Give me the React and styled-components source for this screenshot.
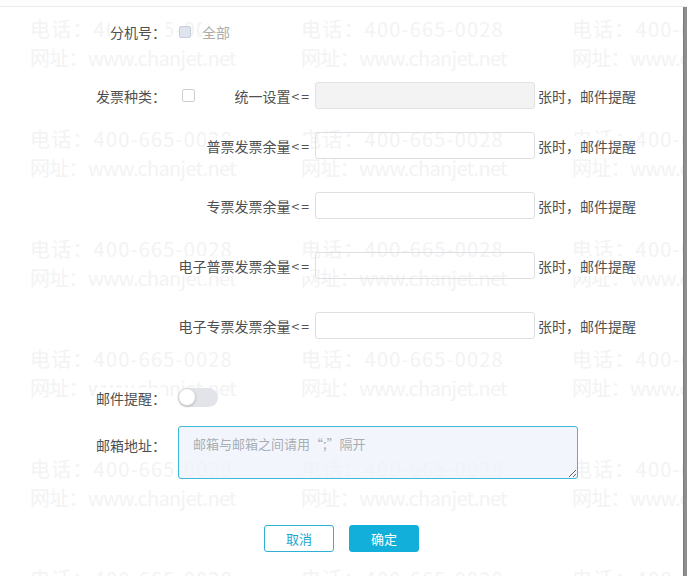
import React from "react";
import styled, { createGlobalStyle } from "styled-components";

const Global = createGlobalStyle`
  html, body { margin: 0; padding: 0; background: #fff; }
  body { font-family: "Noto Sans CJK SC", "Microsoft YaHei", sans-serif; }
  * { box-sizing: border-box; }
`;

const Page = styled.div`
  width: 687px;
  height: 576px;
  display: flex;
  flex-direction: column;
  overflow: hidden;
  background: #fff;
`;

const TopStrip = styled.div`
  height: 7px;
  flex: none;
  background: #fdfdfd;
  border-bottom: 1px solid #ebebeb;
`;

const Body = styled.div`
  flex: 1;
  display: flex;
  min-height: 0;
`;

const Content = styled.div`
  flex: 1;
  position: relative;
  overflow: hidden;
`;

const ScrollThumb = styled.div`
  width: 4px;
  flex: none;
  background: #8e8e8e;
  border-left: 1px solid #7c7c7c;
`;

const Watermark = styled.div`
  position: absolute;
  inset: 0;
  z-index: 0;
  pointer-events: none;
  display: grid;
  grid-template-columns: repeat(3, 271px);
  grid-auto-rows: 110px;
  padding: 7px 0 0 30px;
  color: #f3f3f3;
  font-size: 20px;
  white-space: nowrap;
`;

const MarkLine = styled.div`
  height: 29px;
  line-height: 29px;
  letter-spacing: ${(p) => p.$spacing || 0}px;
`;

const Form = styled.div`
  position: relative;
  z-index: 1;
  display: flex;
  flex-direction: column;
  font-size: 14px;
  color: #505050;
`;

const Row = styled.div`
  display: flex;
  align-items: ${(p) => (p.$top ? "flex-start" : "center")};
  min-height: 27px;
  margin-top: ${(p) => p.$mt}px;
`;

const LabelCell = styled.div`
  width: 166px;
  margin-right: 12px;
  flex: none;
  text-align: right;
  line-height: 20px;
  padding-top: ${(p) => p.$pt || 0}px;
`;

const Text = styled.span`
  background: #fff;
  line-height: 20px;
`;

const Op = styled.span`
  letter-spacing: 2px;
  margin-left: 1px;
`;

const Controls = styled.div`
  display: flex;
  align-items: center;
`;

const Checkbox = styled.span`
  display: inline-block;
  width: ${(p) => (p.$disabled ? 12 : 13)}px;
  height: ${(p) => (p.$disabled ? 12 : 13)}px;
  margin-left: ${(p) => p.$ml || 0}px;
  border-radius: 2px;
  border: 1px solid ${(p) => (p.$disabled ? "#c7cedb" : "#cfcfcf")};
  background: ${(p) => (p.$disabled ? "#dfe4ee" : "#fff")};
  flex: none;
`;

const MutedText = styled.span`
  margin-left: 11px;
  color: #ababab;
  background: #fff;
  line-height: 20px;
`;

const InnerLabel = styled.div`
  width: ${(p) => p.$w}px;
  flex: none;
  text-align: right;
  line-height: 20px;
`;

const NumInput = styled.input`
  width: 220px;
  height: 27px;
  margin-left: 4px;
  border: 1px solid ${(p) => (p.disabled ? "#e2e2e2" : "#dcdfe4")};
  border-radius: 3px;
  background: ${(p) => (p.disabled ? "#f3f3f3" : "transparent")};
  outline: none;
  font: inherit;
  padding: 0 8px;
`;

const Suffix = styled.span`
  margin-left: 3px;
  line-height: 20px;
`;

const Switch = styled.span`
  position: relative;
  display: inline-block;
  width: 40px;
  height: 19px;
  border-radius: 10px;
  background: #e2e4e9;
`;

const Knob = styled.span`
  position: absolute;
  left: 0;
  top: 0;
  width: 18px;
  height: 18px;
  border-radius: 50%;
  background: #fff;
  border: 1px solid #d6d6d6;
  box-shadow: 0 1px 2px rgba(0, 0, 0, 0.18);
`;

const TextArea = styled.textarea`
  width: 400px;
  height: 53px;
  border: 1px solid #3db8d6;
  border-radius: 3px;
  background: rgba(236, 242, 251, 0.7);
  padding: 8px 14px;
  font-family: "Noto Sans CJK SC", "Microsoft YaHei", sans-serif;
  font-size: 13px;
  line-height: 18px;
  color: #333;
  outline: none;
  &::placeholder {
    color: #a9adb3;
  }
`;

const Buttons = styled.div`
  display: flex;
  justify-content: center;
  gap: 15px;
  margin-top: 46px;
`;

const Button = styled.button`
  width: 70px;
  height: 27px;
  border-radius: 3px;
  font-family: "Noto Sans CJK SC", "Microsoft YaHei", sans-serif;
  font-size: 13px;
  padding: 0;
  cursor: pointer;
  border: 1px solid ${(p) => (p.$primary ? "#12afda" : "#2eb1d5")};
  background: ${(p) => (p.$primary ? "#12afda" : "#fff")};
  color: ${(p) => (p.$primary ? "#fff" : "#1ba7d0")};
`;

const thresholds = [
  { label: "普票发票余量", mt: 23 },
  { label: "专票发票余量", mt: 33 },
  { label: "电子普票发票余量", mt: 33 },
  { label: "电子专票发票余量", mt: 33 },
];

export default function App() {
  const tiles = [];
  for (let i = 0; i < 18; i++) {
    tiles.push(
      <div key={i}>
        <MarkLine $spacing={1.2}>电话：400-665-0028</MarkLine>
        <MarkLine $spacing={-0.7}>网址：www.chanjet.net</MarkLine>
      </div>
    );
  }
  return (
    <>
      <Global />
      <Page>
        <TopStrip />
        <Body>
          <Content>
            <Watermark>{tiles}</Watermark>
            <Form>
              <Row $mt={11}>
                <LabelCell>
                  <Text>分机号：</Text>
                </LabelCell>
                <Controls>
                  <Checkbox $disabled $ml={1} />
                  <MutedText>全部</MutedText>
                </Controls>
              </Row>
              <Row $mt={37}>
                <LabelCell>
                  <Text>发票种类：</Text>
                </LabelCell>
                <Controls>
                  <Checkbox $ml={4} />
                  <InnerLabel $w={116}>
                    <Text>
                      统一设置<Op>&lt;=</Op>
                    </Text>
                  </InnerLabel>
                  <NumInput disabled />
                  <Suffix>
                    <Text>张时，邮件提醒</Text>
                  </Suffix>
                </Controls>
              </Row>
              {thresholds.map((t) => (
                <Row key={t.label} $mt={t.mt}>
                  <LabelCell />
                  <Controls>
                    <InnerLabel $w={133}>
                      <Text>
                        {t.label}
                        <Op>&lt;=</Op>
                      </Text>
                    </InnerLabel>
                    <NumInput />
                    <Suffix>
                      <Text>张时，邮件提醒</Text>
                    </Suffix>
                  </Controls>
                </Row>
              ))}
              <Row $mt={45}>
                <LabelCell>
                  <Text>邮件提醒：</Text>
                </LabelCell>
                <Controls>
                  <Switch>
                    <Knob />
                  </Switch>
                </Controls>
              </Row>
              <Row $mt={15} $top>
                <LabelCell $pt={9}>
                  <Text>邮箱地址：</Text>
                </LabelCell>
                <TextArea placeholder="邮箱与邮箱之间请用“;”隔开" />
              </Row>
              <Buttons>
                <Button>取消</Button>
                <Button $primary>确定</Button>
              </Buttons>
            </Form>
          </Content>
          <ScrollThumb />
        </Body>
      </Page>
    </>
  );
}
